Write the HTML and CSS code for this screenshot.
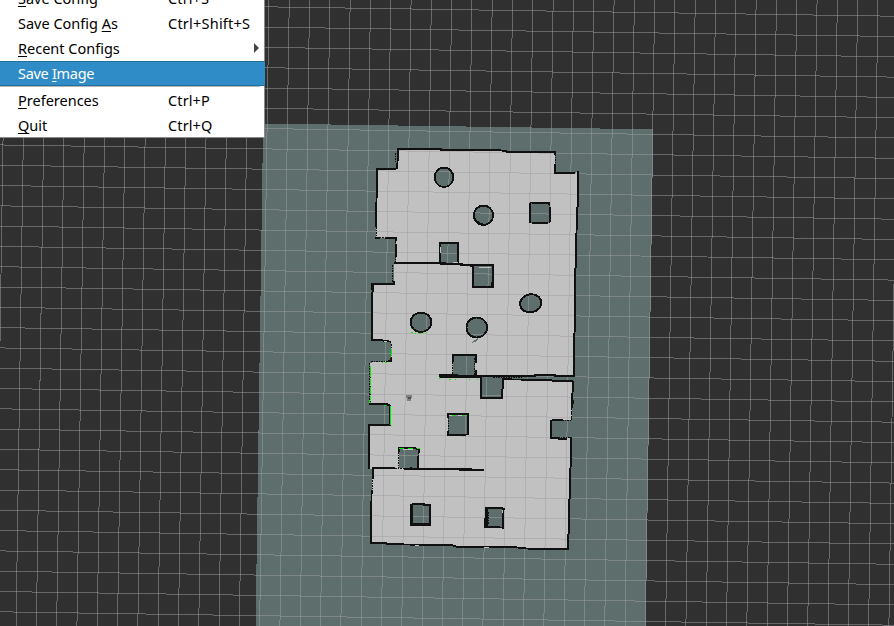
FILE: index.html
```html
<!DOCTYPE html>
<html lang="en">
<head>
<meta charset="utf-8">
<title>Map view</title>
<link rel="stylesheet" href="styles.css">
</head>
<body>
<main class="viewport">
<svg class="scene" viewBox="0 0 894 626" width="894" height="626" shape-rendering="crispEdges">
  <path class="unknown" d="M263.1 123.5L653.2 129.3L652.5 178L648.5 445L645.8 626H255.6L258.5 430Z"/>
  <path class="free" d="M398 149.5L441 149.5L498 150.3L507 152H555.3V173H575L577.7 172L577 207L576 250L575 290L574.5 376L510 378L573.5 381L572.7 400L571.3 420H550.7V438.3H570.7V467L569.3 500L568 549L526.7 548.7L516.7 547.5L456.7 546.5L451.7 545L403 544.5L370.5 543L371 510L373 469H369.3V425.7H390.3V404L370 403V362.7L391 361L391.5 342L371.7 340.3V284L393.5 283.7V264L395.7 262V238H375.7L376.7 169.3H396.7Z"/>
  <g class="unknown">
    <ellipse cx="444.2" cy="177.3" rx="9.5" ry="10"/>
    <ellipse cx="483.2" cy="215.3" rx="10" ry="10"/>
    <path d="M530 203h20v20h-20zM439.5 243h19v21h-19zM473 265h20v21h-20zM453 355h22v21h-22zM481 377h21v22h-21zM448 414h20v21h-20zM399 448h20v20h-20zM412 504h18v21h-18zM487 509h17v18h-17z"/>
    <ellipse cx="421" cy="322.3" rx="10.3" ry="10"/>
    <ellipse cx="477" cy="327.5" rx="10" ry="10"/>
    <ellipse cx="530.7" cy="303.3" rx="10.5" ry="9"/>
    <path d="M476 375L574 376L573.5 381L548 379.5L476 378Z"/>
    <path class="scratch" d="M472 343l2-2h2l2-3"/>
  </g>
  <path id="rows" class="grid"/>
  <path id="columns" class="grid"/>

  <g transform="translate(360 140) scale(.33333)">
    <path class="wall" d="M107 88H50L51 130L49 200L48 262M110 88L112 72L113 60V27L243 27V29L415 30L440 34V36L586 37V44M586 73V99H645M655 94L653 200L650 206L651 250L648 300L649 375L645 390V450M47 290V295H60M75 295H107V302M107 313V350M101 425V432H42M37 430V450"/>
    <path class="wall dots" d="M108 38V70M588 42V73M49 262V292M50 293H78M107 302V370M99 376V430"/>
    <path class="wall thick" d="M101 370H238L300 373L340 377"/>
    <path class="wall" d="M239 365V309H295V373M339 375V440H397V425M340 375H400V398"/>
    <path class="wall dots" d="M241 315V365M399 390V425"/>
    <path class="glint" d="M241 320v20M278 367h15M357 382h36M277 110v13"/>
    <ellipse class="wall" cx="252" cy="112" rx="28" ry="29"/>
    <ellipse class="wall" cx="370.500" cy="226" rx="29" ry="29"/>
    <path class="wall" d="M342 230Q348 249 368 253"/>
    <path class="wall" d="M511 247V190M515 188H568V194M569 202V247M515 248H564"/>
    <path class="wall dots" d="M509 188H570V249H510Z"/>
  </g>

  <g transform="translate(360 270) scale(.33333)">
    <path class="wall" d="M101 33V41H38V66L35 72V211H66L92 215M84 273H93V265M27 402H80L90 406M645 0V180L643 190V315M638 334V363L635 390V415M338 0V50H398V0"/>
    <path class="wall dots" d="M95 222V270M98 0V32M32 275H90M30 279V400M33 288V398M636 415V448"/>
    <ellipse class="wall" cx="183" cy="157" rx="31" ry="29"/>
    <ellipse class="wall" cx="350.500" cy="172.500" rx="31" ry="30"/>
    <ellipse class="wall" cx="512" cy="100" rx="32" ry="27" transform="rotate(-12 512 100)"/>
    <path class="wall" d="M278 275V255H347V280M347 300V318"/>
    <path class="wall dots" d="M279 276V317M344 265V317"/>
    <path class="wall" d="M238 316H280L370 318H410M363 321L238 321M410 318L524 318V314H584V318H645M363 321V385H425V364L428 355V328L505 329L570 330L580 333H640"/>
    <path class="wall dots" d="M267 324H290M400 322H485M364 335V380M428 328V350"/>
    <path class="glint" d="M36 280h45M71 214h10"/>
    <path class="laser" d="M31 288V322M31 327V345M31 350V372M31 378V390M240 322V326M95 238V258M91 408V450"/>
    <path class="laser dots" d="M156 175V188L180 191L200 187M65 279H88M30 398H40"/>
    <path class="laser spot" d="M268 328h4M284 328h3M327 328h4M351 328h4"/>
    <path class="robot" d="M138 374h17v11h-3v7h-11v-7h-3z"/>
    <path class="robotcore" d="M143 380h9v7h-9z"/>
  </g>

  <g transform="translate(360 400) scale(.33333)">
    <path class="wall" d="M27 12H78L91 17V76H27V208M638 0V12L635 18M572 60V115H595L597 118H620M575 60H610M632 112V200L630 210V288L628 300V325L626 400L623 410V447L510 446L490 445L470 442L380 441L290 440L275 435L160 434L80 432L78 429H30M34 428V320L35 270M39 238V204H104M132 206L300 207V210H368V206"/>
    <path class="wall thick" d="M150 206L300 207L368 211"/>
    <path class="wall dots" d="M635 18V60M575 61H635M595 113H634M37 240V270M105 206H132"/>
    <path class="wall" d="M264 54V41H325V103L303 105H264V92M116 142V155M116 143H160L178 149V160M175 168V204"/>
    <path class="wall dots" d="M265 45V92M117 155V204M177 157V170"/>
    <path class="wall thick" d="M155 311V374H210V317"/>
    <path class="wall" d="M155 312H193V316H214M380 325V380L430 383V327H436M374 323H430M374 354V383"/>
    <path class="wall thick" d="M380 325V382"/>
    <path class="wall dots" d="M385 335V374M210 320V370"/>
    <path class="glint" d="M165 436h12M130 148h28M428 330v10M372 442h15M268 46h8M294 46h12"/>
    <path class="laser" d="M91 17V75M29 0v8M117 146H133M143 146H160M172 146h7"/>
    <path class="laser spot" d="M277 46h4M286 46h3M309 46h3M318 46h4M72 16h5"/>
  </g>
</svg>

<nav class="menu">
  <div class="item"><span class="label"><u>S</u>ave Config</span><span class="key">Ctrl+S</span></div>
  <div class="item"><span class="label">Save Config <u>A</u>s</span><span class="key wide">Ctrl+Shift+S</span></div>
  <div class="item"><span class="label"><u>R</u>ecent Configs</span><i class="arrow"></i></div>
  <div class="item active"><span class="label">Save <u>I</u>mage</span></div>
  <div class="separator"></div>
  <div class="item"><span class="label"><u>P</u>references</span><span class="key">Ctrl+P</span></div>
  <div class="item"><span class="label"><u>Q</u>uit</span><span class="key">Ctrl+Q</span></div>
</nav>
</main>
<script src="grid.js"></script>
</body>
</html>
```
FILE: styles.css
```css
body {
  margin: 0;
  overflow: hidden;
  background: #303030;
}
.viewport {
  position: relative;
  width: 894px;
  height: 626px;
  overflow: hidden;
}
.scene { display: block; }
.unknown { fill: #5d6e6c; }
.free { fill: #c1c1c1; }
.scratch { fill: none; stroke: #5d6e6c; stroke-width: 1.3; }
.grid { fill: none; stroke: #a0a0a4; stroke-opacity: .5; stroke-width: 1; }
.wall { fill: none; stroke: #101010; stroke-width: 5.6; }
.thick { stroke-width: 7; }
.dots { stroke-width: 3; stroke-dasharray: 6 3 3 3; }
.glint { fill: none; stroke: #c1c1c1; stroke-width: 3; }
.laser { fill: none; stroke: #00f000; stroke-width: 3; }
.laser.dots { stroke-dasharray: 3 8 6 6; }
.robot { fill: #808080; }
.robotcore { fill: #505050; }

.menu {
  position: absolute;
  left: 0;
  top: -14px;
  box-sizing: border-box;
  width: 265px;
  height: 152px;
  background: #fff;
  border-right: 1px solid #8b8b8b;
  border-bottom: 1px solid #8b8b8b;
  font: 14.5px/25px "Noto Sans", "Open Sans", sans-serif;
  color: #000;
}
.item {
  display: grid;
  grid-template-columns: 150px 1fr;
  align-items: center;
  height: 25px;
  padding-left: 18px;
  white-space: nowrap;
}
.item u {
  text-decoration-thickness: 1px;
  text-underline-offset: 2px;
}
.key { letter-spacing: .12px; }
.wide { letter-spacing: .22px; }
.active {
  box-sizing: border-box;
  line-height: 23px;
  margin-right: -1px;
  background: #308cc6;
  border-top: 1px solid #2270a2;
  border-bottom: 1px solid #2270a2;
  color: #fff;
  letter-spacing: -.3px;
}
.separator {
  height: 1px;
  margin: 0 4px 1px 0;
  background: #b4b4b4;
}
.arrow {
  justify-self: end;
  margin-right: 5px;
  border-left: 5px solid #444;
  border-top: 5px solid transparent;
  border-bottom: 5px solid transparent;
  position: relative;
  top: -1px;
}
```
FILE: grid.js
```js
// Ground grid: two families of parallel lines, slightly rotated.
const slope = 0.01495;
const step = 20.299;
let rows = "";
let columns = "";
for (let k = -1; k < 33; k++) {
  const y = 2.845 + k * step;
  rows += `M0 ${y.toFixed(2)}L894 ${(y + 894 * slope).toFixed(2)}`;
}
for (let k = -1; k < 46; k++) {
  const x = 5.107 + k * step;
  columns += `M${x.toFixed(2)} 0L${(x - 626 * slope).toFixed(2)} 626`;
}
document.getElementById("rows").setAttribute("d", rows);
document.getElementById("columns").setAttribute("d", columns);
```
